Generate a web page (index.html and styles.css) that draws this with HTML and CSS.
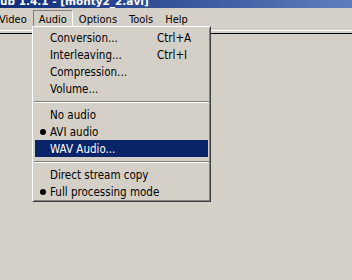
FILE: index.html
```html
<!DOCTYPE html>
<html lang="en">
<head>
    <meta charset="UTF-8">
    <title>VirtualDub - Audio menu</title>
    <link rel="stylesheet" href="styles.css">
</head>
<body>
    <div class="titlebar">
        <span class="title-text">ub 1.4.1 - [monty2_2.avi]</span>
    </div>

    <div class="menubar">
        <span class="menubar-item">Video</span>
        <span class="menubar-item open">Audio</span>
        <span class="menubar-item">Options</span>
        <span class="menubar-item">Tools</span>
        <span class="menubar-item">Help</span>
    </div>

    <div class="client">
        <div class="client-inner"></div>
    </div>

    <!-- dropdown for the Audio menu -->
    <div class="dropdown">
        <div class="item"><span class="check"></span><span>Conversion...</span><span>Ctrl+A</span></div>
        <div class="item"><span class="check"></span><span>Interleaving...</span><span>Ctrl+I</span></div>
        <div class="item"><span class="check"></span><span>Compression...</span><span></span></div>
        <div class="item"><span class="check"></span><span>Volume...</span><span></span></div>
        <div class="separator"></div>
        <div class="item"><span class="check"></span><span>No audio</span><span></span></div>
        <div class="item"><span class="check"><i class="dot"></i></span><span>AVI audio</span><span></span></div>
        <div class="item selected"><span class="check"></span><span>WAV Audio...</span><span></span></div>
        <div class="separator"></div>
        <div class="item"><span class="check"></span><span>Direct stream copy</span><span></span></div>
        <div class="item"><span class="check"><i class="dot"></i></span><span>Full processing mode</span><span></span></div>
    </div>
</body>
</html>
```

FILE: styles.css
```css
body {
    margin: 0;
    background: #d4d0c8;
    font-family: 'DejaVu Sans Condensed', 'DejaVu Sans', sans-serif;
    font-size: 11px;
    color: #000;
    width: 352px;
    height: 280px;
    overflow: hidden;
}

.titlebar {
    height: 8px;
    overflow: hidden;
    background: linear-gradient(to right, #0e2c78, #5d7ebf);
    color: #fff;
}

.title-text {
    display: block;
    font-family: 'DejaVu Sans', sans-serif;
    font-size: 10.5px;
    font-weight: bold;
    line-height: 13px;
    margin-top: -5px;
    white-space: nowrap;
}

.menubar {
    display: flex;
    height: 20px;
    padding-top: 2px;
    margin-left: -7px;
}

.menubar-item {
    height: 18px;
    line-height: 17px;
    padding: 0 5px;
    border: 1px solid transparent;
}

.menubar-item.open {
    border-color: #808080 #fff #fff #808080;
}

.client {
    border-top: 1px solid #fff;
    padding-top: 2px;
}

.client-inner {
    border-top: 1px solid #000;
    height: 240px;
}

.dropdown {
    position: absolute;
    left: 32px;
    top: 26px;
    width: 177px;
    padding: 2px 0 1px;
    background: #d4d0c8;
    border: 1px solid;
    border-color: #fff #404040 #404040 #fff;
    box-shadow: inset 1px 1px #d4d0c8, inset -1px -1px #808080;
    font-size: 11.5px;
}

.item {
    display: grid;
    grid-template-columns: 15px 107px auto;
    align-items: center;
    height: 17px;
    margin: 0 2px;
    white-space: nowrap;
}

.item.selected {
    background: #0a246a;
    color: #fff;
}

.check {
    display: flex;
    justify-content: center;
    align-items: center;
}

.dot {
    width: 6px;
    height: 6px;
    border-radius: 50%;
    background: #000;
}

.separator {
    height: 9px;
    margin: 0 1px;
    box-sizing: border-box;
    padding-top: 4px;
}

.separator::after {
    content: '';
    display: block;
    border-top: 1px solid #808080;
    border-bottom: 1px solid #fff;
}
```
